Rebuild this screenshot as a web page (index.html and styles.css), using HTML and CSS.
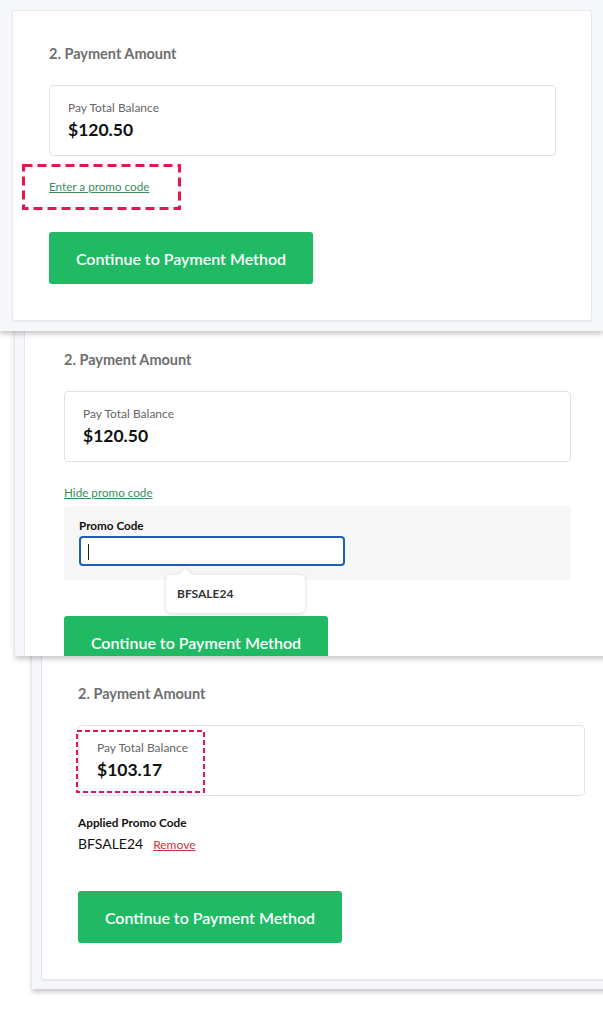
FILE: index.html
```html
<!DOCTYPE html>
<html>
<head>
  <meta charset="utf-8">
  <title>Payment Amount - promo code states</title>
  <link rel="stylesheet" href="styles.css">
</head>
<body>
  <div class="stack">

    <!-- state 1: promo collapsed -->
    <section class="shot shot-one">
      <div class="card">
        <h2 class="step-title">2. Payment Amount</h2>
        <div class="balance">
          <div class="balance-label">Pay Total Balance</div>
          <div class="balance-amount">$120.50</div>
        </div>
        <div class="promo-toggle">
          <a class="link" href="#">Enter a promo code</a>
          <svg class="callout callout-link" width="159" height="46" viewBox="0 0 159 46">
            <rect x="1.5" y="1.5" width="156" height="43" fill="none" stroke="#e0184b" stroke-width="3" stroke-dasharray="9 5"/>
          </svg>
        </div>
        <button class="btn-continue">Continue to Payment Method</button>
      </div>
    </section>

    <!-- state 2: promo field open -->
    <section class="shot shot-two">
      <div class="card">
        <h2 class="step-title">2. Payment Amount</h2>
        <div class="balance">
          <div class="balance-label">Pay Total Balance</div>
          <div class="balance-amount">$120.50</div>
        </div>
        <div class="promo-toggle">
          <a class="link" href="#">Hide promo code</a>
        </div>
        <div class="promo-box">
          <label class="field-label">Promo Code</label>
          <div class="promo-input"><span class="caret"></span></div>
          <div class="suggest">BFSALE24</div>
        </div>
        <button class="btn-continue btn-cut">Continue to Payment Method</button>
      </div>
    </section>

    <!-- state 3: promo applied -->
    <section class="shot shot-three">
      <div class="card">
        <h2 class="step-title">2. Payment Amount</h2>
        <div class="balance">
          <div class="balance-label">Pay Total Balance</div>
          <div class="balance-amount">$103.17</div>
          <svg class="callout callout-balance" width="129" height="63" viewBox="0 0 129 63">
            <rect x="1" y="1" width="127" height="61" fill="none" stroke="#e0184b" stroke-width="2" stroke-dasharray="5 3"/>
          </svg>
        </div>
        <div class="applied">
          <div class="field-label applied-label">Applied Promo Code</div>
          <div class="applied-row">
            <span class="applied-code">BFSALE24</span>
            <a class="remove" href="#">Remove</a>
          </div>
        </div>
        <button class="btn-continue">Continue to Payment Method</button>
      </div>
    </section>

  </div>
</body>
</html>
```

FILE: styles.css
```css
html, body {
  margin: 0;
  background: #fff;
}
body {
  font-family: Lato, "Open Sans", sans-serif;
  color: #111;
}

.stack {
  width: 603px;
  padding-bottom: 36px;
  overflow: hidden;
}

/* each screenshot */
.shot {
  position: relative;
  background: #f5f7fa;
  box-shadow: 0 3px 5px rgba(0, 0, 0, 0.22);
  padding: 10px 11px 10px 9px;
  box-sizing: border-box;
}
.shot-one {
  z-index: 3;
  width: 603px;
  padding-left: 12px;
}
.shot-two {
  z-index: 2;
  margin-left: 15px;
  margin-top: -25px;
  width: 615px;
  height: 350px;
  overflow: hidden;
  padding-bottom: 0;
}
.shot-three {
  z-index: 1;
  margin-left: 32px;
  margin-top: -16px;
  width: 615px;
  padding-bottom: 9px;
}

.card {
  width: 580px;
  box-sizing: border-box;
  background: #fff;
  border: 1px solid #e5e8ec;
  border-radius: 3px;
  box-shadow: 0 1px 2px rgba(0, 0, 0, 0.06);
  padding: 34px 36px 36px 36px;
}
.shot-two .card { padding-left: 39px; }

.step-title {
  margin: 0 0 22px;
  font-size: 14.5px;
  line-height: 18px;
  font-weight: 700;
  color: #6e6e6e;
}

.balance {
  position: relative;
  border: 1px solid #e2e2e2;
  border-radius: 4px;
  width: 507px;
  box-sizing: border-box;
  padding: 15px 18px;
}
.balance-label {
  font-size: 12px;
  line-height: 14px;
  color: #666;
}
.balance-amount {
  margin-top: 5px;
  font-size: 17.5px;
  line-height: 20px;
  font-weight: 700;
  color: #111;
}

.promo-toggle {
  position: relative;
  margin-top: 23px;
  font-size: 11.7px;
  line-height: 14px;
}
.link {
  color: #3b8c60;
  text-decoration: underline;
}

/* red annotation boxes */
.callout {
  position: absolute;
  display: block;
}
.callout-link {
  left: -27px;
  top: -15px;
}
.callout-balance {
  left: -3px;
  top: 4px;
}

.btn-continue {
  display: block;
  margin-top: 39px;
  width: 264px;
  height: 52px;
  border: 0;
  border-radius: 3px;
  background: #1fba63;
  color: #fff;
  font-family: inherit;
  font-size: 16px;
  font-weight: 600;
}
.btn-cut { margin-top: 36px; }

.promo-box {
  position: relative;
  margin-top: 7px;
  width: 507px;
  box-sizing: border-box;
  background: #f6f6f6;
  border-radius: 3px;
  padding: 12px 15px 14px;
}
.field-label {
  display: block;
  font-size: 11.7px;
  line-height: 14px;
  font-weight: 700;
  color: #111;
}
.applied-label { font-size: 11.8px; }
.promo-input {
  margin-top: 4px;
  width: 266px;
  height: 30px;
  box-sizing: border-box;
  background: #fff;
  border: 2px solid #1f5fb3;
  border-radius: 4px;
  padding: 6px 7px;
}
.caret {
  display: block;
  width: 1px;
  height: 16px;
  background: #222;
}
.suggest {
  position: absolute;
  left: 102px;
  top: 69px;
  width: 139px;
  height: 38px;
  box-sizing: border-box;
  padding: 0 11px;
  background: #fff;
  border-radius: 5px;
  box-shadow: 0 1px 4px rgba(0, 0, 0, 0.16);
  font-size: 12px;
  line-height: 38px;
  font-weight: 700;
  color: #333;
}
.suggest::before {
  content: "";
  position: absolute;
  left: 14px;
  top: -5px;
  width: 10px;
  height: 10px;
  background: #fff;
  transform: rotate(45deg);
  box-shadow: -1px -1px 2px rgba(0, 0, 0, 0.06);
}

.applied {
  margin-top: 20px;
}
.applied-row {
  margin-top: 6px;
  display: flex;
  align-items: baseline;
  gap: 10px;
}
.applied-code {
  font-size: 14px;
  line-height: 16px;
  color: #111;
}
.remove {
  font-size: 12px;
  color: #c8343a;
  text-decoration: underline;
}
```
